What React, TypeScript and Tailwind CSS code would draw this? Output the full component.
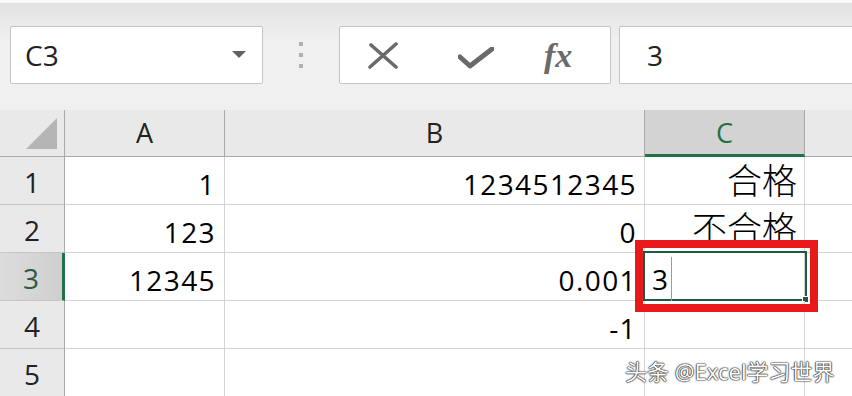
const cellFont = { fontFamily: '"Open Sans", "Noto Sans CJK SC", sans-serif' };

const rows = [
    { n: '1', a: '1', b: '1234512345', c: '合格' },
    { n: '2', a: '123', b: '0', c: '不合格' },
    { n: '3', a: '12345', b: '0.001', c: '' },
    { n: '4', a: '', b: '-1', c: '' },
    { n: '5', a: '', b: '', c: '' },
];

function Toolbar() {
    return (
        <div className="flex h-[110px] items-center border-t-[3px] border-[#f9f9f9] bg-[linear-gradient(#e2e2e2,#f0f0f0_35%)] pb-[3px] pl-[10px]">
            <div className="flex h-[58px] w-[253px] items-center justify-between rounded-[2px] border border-[#c4c4c4] bg-white pl-[14px] pr-[16px]">
                <span className="text-[28px] text-[#222]">C3</span>
                <svg width="14" height="8" viewBox="0 0 14 8">
                    <path d="M0 0 L14 0 L7 7 Z" fill="#5f6368" />
                </svg>
            </div>
            <div className="flex w-[76px] flex-col items-center gap-[7px]">
                <span className="h-[4px] w-[4px] bg-[#b0b0b0]" />
                <span className="h-[4px] w-[4px] bg-[#b0b0b0]" />
                <span className="h-[4px] w-[4px] bg-[#b0b0b0]" />
            </div>
            <div className="flex h-[58px] w-[272px] items-center rounded-[2px] border border-[#c4c4c4] bg-white">
                <svg className="ml-[28px]" width="30" height="28" viewBox="0 0 30 28">
                    <path d="M2 26 L28 3 M3 4 L28 26" stroke="#6a6a6a" strokeWidth="3.6" strokeLinecap="round" fill="none" />
                </svg>
                <svg className="ml-[60px] mt-[6px]" width="36" height="22" viewBox="0 0 36 22">
                    <path d="M2 10 L12 19 L34 2" stroke="#6a6a6a" strokeWidth="5" strokeLinejoin="round" strokeLinecap="round" fill="none" />
                </svg>
                <span className="ml-[50px] text-[34px] font-bold italic text-[#6a6a6a]" style={{ fontFamily: '"Liberation Serif", serif' }}>
                    fx
                </span>
            </div>
            <div className="ml-[8px] flex h-[58px] flex-1 items-center rounded-l-[2px] border border-r-0 border-[#c4c4c4] bg-white pl-[27px]">
                <span className="text-[28px] text-[#222]">3</span>
            </div>
        </div>
    );
}

function Sheet() {
    return (
        <div className="relative">
            <div className="grid grid-cols-[65px_160px_420px_160px_1fr] grid-rows-[47px_repeat(5,48px)] text-[28px] text-black">
                <div className="flex items-center justify-end border-b border-r border-[#a9a9a9] bg-[#e9e9e9] pr-[7px]">
                    <svg width="31" height="31" viewBox="0 0 31 31">
                        <path d="M31 0 L31 31 L0 31 Z" fill="#b5b5b5" />
                    </svg>
                </div>
                <div className="flex items-center justify-center border-b border-r border-[#a9a9a9] bg-[#e9e9e9] text-[27px] text-[#222]">A</div>
                <div className="flex items-center justify-center border-b border-r border-[#a9a9a9] bg-[#e9e9e9] text-[27px] text-[#222]">B</div>
                <div className="flex items-center justify-center border-b-[3px] border-r border-b-[#217346] border-r-[#a9a9a9] bg-[#d3d3d3] pt-[2px] text-[27px] text-[#217346]">C</div>
                <div className="border-b border-[#a9a9a9] bg-[#e9e9e9]" />
                {rows.map((r) => {
                    const sel = r.n === '3';
                    return (
                        <div key={r.n} className="contents">
                            <div
                                className={
                                    sel
                                        ? 'flex items-center justify-center border-b border-r-[3px] border-b-[#c6c6c6] border-r-[#217346] bg-[linear-gradient(90deg,#dcdcdc,#cfcfcf)] pt-[2px] text-[#2d5a44]'
                                        : 'flex items-center justify-center border-b border-r border-b-[#c6c6c6] border-r-[#a9a9a9] bg-[#e9e9e9] pt-[2px] text-[#222]'
                                }
                            >
                                {r.n}
                            </div>
                            <div className="flex items-center justify-end border-b border-r border-[#d4d4d4] bg-white pr-[8px] pt-[6px] tracking-[1.4px]">{r.a}</div>
                            <div className="flex items-center justify-end border-b border-r border-[#d4d4d4] bg-white pr-[7px] pt-[6px] tracking-[1.4px]">{r.b}</div>
                            <div className="relative flex items-center justify-end overflow-visible border-b border-r border-[#d4d4d4] bg-white pr-[7px]">
                                {r.c && (
                                    <span className="whitespace-nowrap text-[35px] font-light leading-none" style={cellFont}>
                                        {r.c}
                                    </span>
                                )}
                                {sel && (
                                    <div className="absolute -left-[2px] -top-[2px] bottom-[-1px] right-[-3px] flex items-center border-2 border-[#1e5c42] pl-[7px] pt-[6px]">
                                        <span>3</span>
                                        <span className="ml-[3px] h-[44px] w-px bg-[#9a9a9a]" />
                                        <span className="absolute -bottom-[4px] -right-[4px] h-[7px] w-[7px] border border-white bg-[#1e5c42]" />
                                    </div>
                                )}
                            </div>
                            <div className="border-b border-[#d4d4d4] bg-white" />
                        </div>
                    );
                })}
            </div>
            <div className="pointer-events-none absolute left-[635px] top-[130px] h-[72px] w-[183px] border-[8px] border-[#e8191a]" />
            <div
                className="pointer-events-none absolute left-[625px] top-[245px] whitespace-nowrap text-[22px] text-white [text-shadow:0_0_2px_#222,0_0_1px_#000,0_0_1px_#000]"
                style={{ fontFamily: '"Noto Sans", "Noto Sans CJK SC", sans-serif' }}
            >
                头条 @Excel学习世界
            </div>
        </div>
    );
}

export default function App() {
    return (
        <main className="h-[396px] w-[852px] overflow-hidden bg-white" style={{ fontFamily: '"Open Sans", "Noto Sans CJK SC", sans-serif' }}>
            <Toolbar />
            <Sheet />
        </main>
    );
}
